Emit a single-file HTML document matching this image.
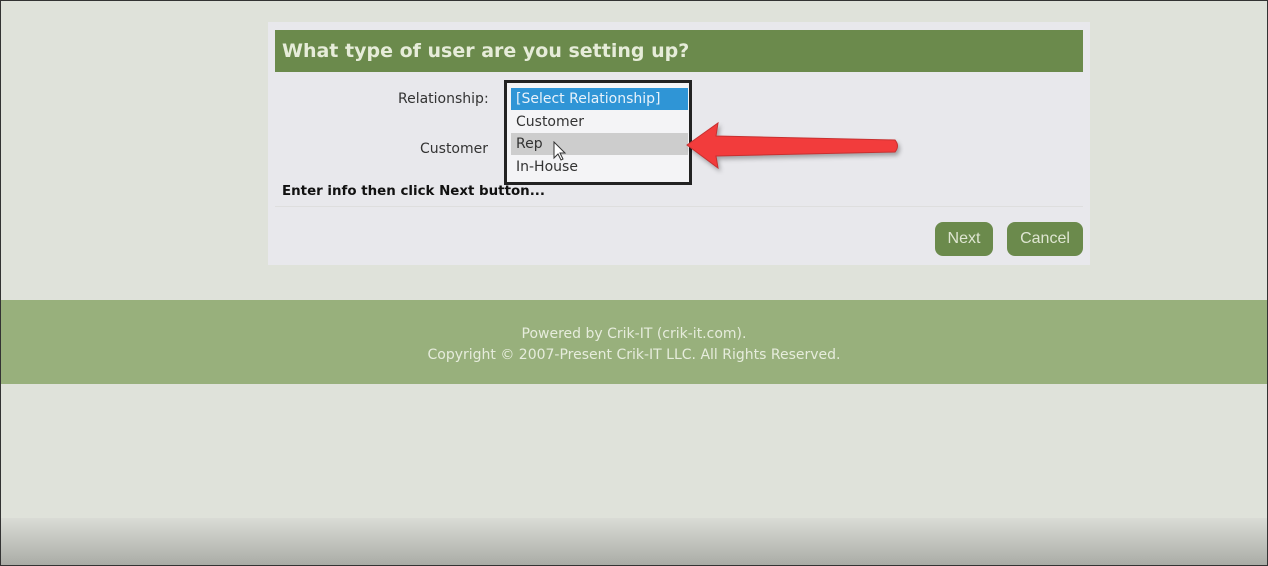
<!DOCTYPE html>
<html><head><style>
*{margin:0;padding:0;box-sizing:border-box}
body{width:1268px;height:566px;overflow:hidden;background:#dfe2da;font-family:"DejaVu Sans","Liberation Sans",sans-serif;position:relative}
.frame{position:absolute;left:0;top:0;width:1268px;height:566px;border:1px solid #333;z-index:10;pointer-events:none}
.card{position:absolute;left:268px;top:22px;width:822px;height:243px;background:#e8e8ec}
.hdr{position:absolute;left:275px;top:30px;width:808px;height:42px;background:#6b8a4c;color:#e6ecd9;font-weight:bold;font-size:19px;line-height:42px;padding-left:7px}
.lbl{position:absolute;font-size:14px;color:#333}
.dd{position:absolute;left:504px;top:80px;width:188px;height:105px;border:3px solid #222;background:#f4f4f6;z-index:2}
.opt{position:absolute;left:4px;width:177px;height:22px;font-size:14px;line-height:22px;padding-left:5px;color:#333}
.btn{position:absolute;top:222px;height:34px;background:#6b8a4c;color:#dfe6d2;border-radius:8px;font-family:"Liberation Sans",sans-serif;font-size:16px;line-height:34px;text-align:center}
.foot{position:absolute;left:0;top:300px;width:1268px;height:84px;background:#98b07c;color:#e6ecdc;font-size:14px;text-align:center;padding-top:24px;line-height:21px}
.grad{position:absolute;left:0;top:518px;width:1268px;height:48px;background:linear-gradient(#dadcd6,#a9aba5)}
</style></head><body>
<div class="frame"></div>
<div class="card"></div>
<div class="hdr">What type of user are you setting up?</div>
<div class="lbl" style="left:398px;top:91px">Relationship:</div>
<div class="lbl" style="left:420px;top:141px">Customer</div>
<div class="lbl" style="left:282px;top:184px;font-weight:bold;color:#111;font-size:13.4px">Enter info then click Next button...</div>
<div style="position:absolute;left:275px;top:206px;width:808px;height:1px;background:#dedede"></div>
<div class="dd">
<div class="opt" style="top:5px;background:#2f95d6;color:#e8f2fb">[Select Relationship]</div>
<div class="opt" style="top:28px">Customer</div>
<div class="opt" style="top:50px;background:#cdcdcd">Rep</div>
<div class="opt" style="top:73px">In-House</div>
</div>
<svg style="position:absolute;left:548px;top:141px;z-index:3" width="20" height="24" viewBox="0 0 20 24"><path d="M6 1v16l4-4 3 6 2-1-3-6h5z" fill="#fff" stroke="#333" stroke-width="1"/></svg>
<svg style="position:absolute;left:680px;top:118px;z-index:3" width="230" height="60"><path d="M7 27 L38 5 L36 18 L215 22 Q220 28 215 34 L36 38 L38 50 Z" fill="#f23c3c" stroke="#c83030" stroke-width="1" style="filter:drop-shadow(2px 3px 2px rgba(0,0,0,.3))"/></svg>
<div class="btn" style="left:935px;width:58px">Next</div>
<div class="btn" style="left:1007px;width:76px">Cancel</div>
<div class="foot">Powered by Crik-IT (crik-it.com).<br>Copyright © 2007-Present Crik-IT LLC. All Rights Reserved.</div>
<div class="grad"></div>
</body></html>
